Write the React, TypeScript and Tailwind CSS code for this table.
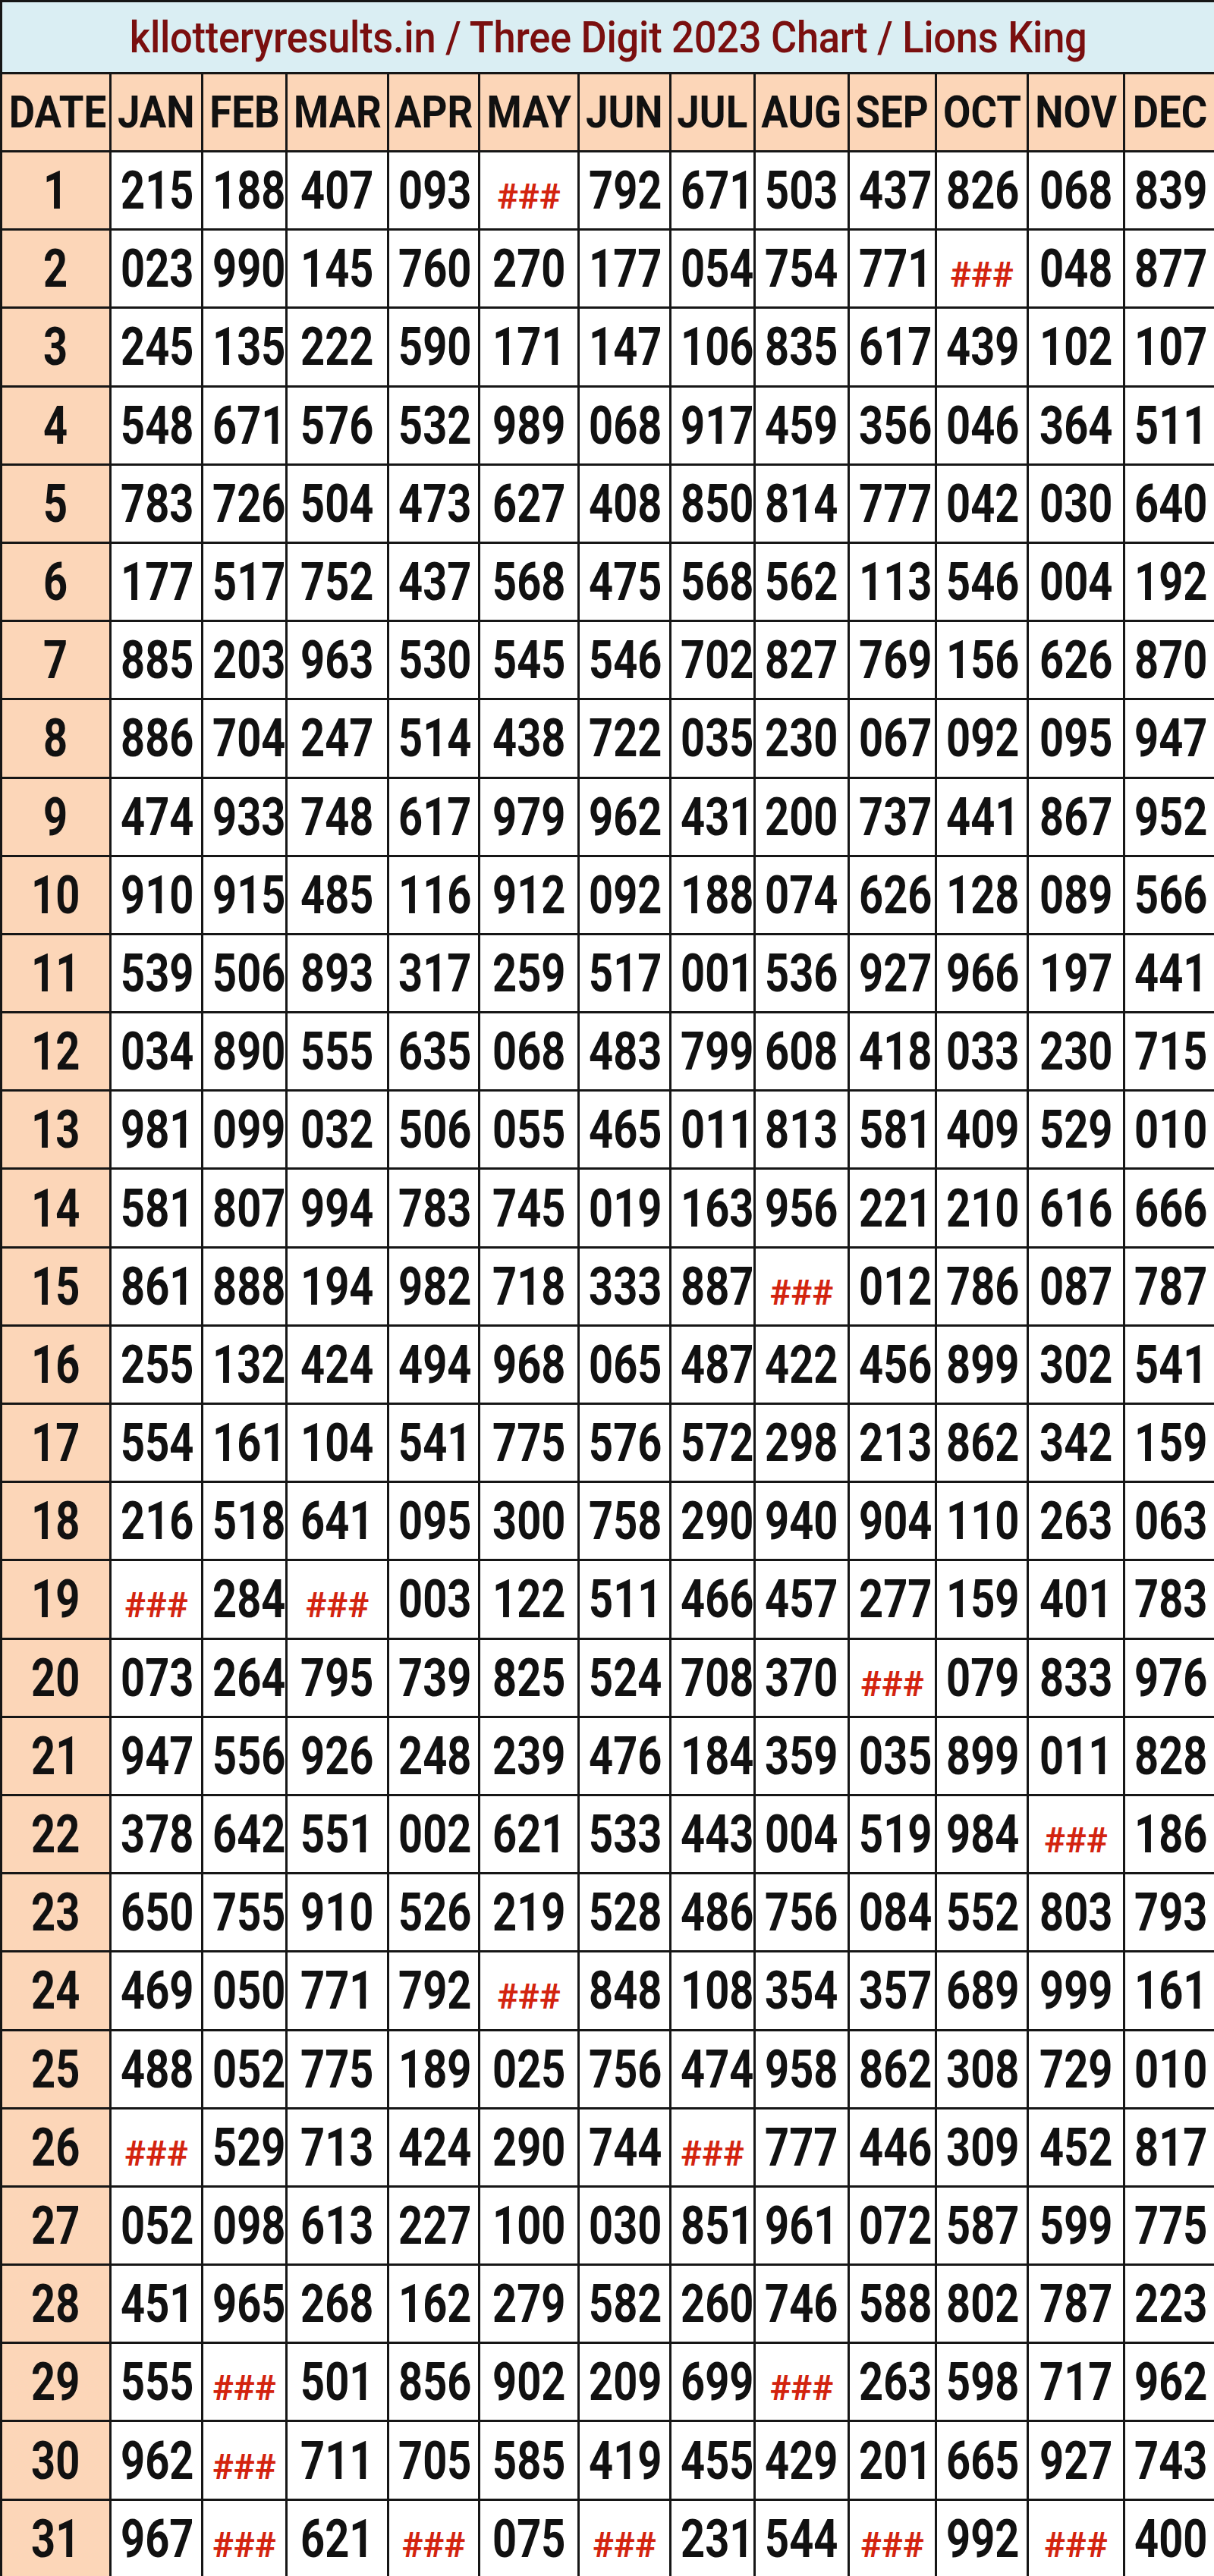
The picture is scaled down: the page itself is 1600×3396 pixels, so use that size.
const MONTHS = ['JAN', 'FEB', 'MAR', 'APR', 'MAY', 'JUN', 'JUL', 'AUG', 'SEP', 'OCT', 'NOV', 'DEC']

// column widths measured off the chart, DATE first
const COLS = [
  'w-[144px]', 'w-[121px]', 'w-[111px]', 'w-[134px]', 'w-[120px]', 'w-[131px]', 'w-[121px]',
  'w-[111px]', 'w-[124px]', 'w-[115px]', 'w-[121px]', 'w-[127px]', 'w-[120px]',
]

const ROWS = `215 188 407 093 ### 792 671 503 437 826 068 839
023 990 145 760 270 177 054 754 771 ### 048 877
245 135 222 590 171 147 106 835 617 439 102 107
548 671 576 532 989 068 917 459 356 046 364 511
783 726 504 473 627 408 850 814 777 042 030 640
177 517 752 437 568 475 568 562 113 546 004 192
885 203 963 530 545 546 702 827 769 156 626 870
886 704 247 514 438 722 035 230 067 092 095 947
474 933 748 617 979 962 431 200 737 441 867 952
910 915 485 116 912 092 188 074 626 128 089 566
539 506 893 317 259 517 001 536 927 966 197 441
034 890 555 635 068 483 799 608 418 033 230 715
981 099 032 506 055 465 011 813 581 409 529 010
581 807 994 783 745 019 163 956 221 210 616 666
861 888 194 982 718 333 887 ### 012 786 087 787
255 132 424 494 968 065 487 422 456 899 302 541
554 161 104 541 775 576 572 298 213 862 342 159
216 518 641 095 300 758 290 940 904 110 263 063
### 284 ### 003 122 511 466 457 277 159 401 783
073 264 795 739 825 524 708 370 ### 079 833 976
947 556 926 248 239 476 184 359 035 899 011 828
378 642 551 002 621 533 443 004 519 984 ### 186
650 755 910 526 219 528 486 756 084 552 803 793
469 050 771 792 ### 848 108 354 357 689 999 161
488 052 775 189 025 756 474 958 862 308 729 010
### 529 713 424 290 744 ### 777 446 309 452 817
052 098 613 227 100 030 851 961 072 587 599 775
451 965 268 162 279 582 260 746 588 802 787 223
555 ### 501 856 902 209 699 ### 263 598 717 962
962 ### 711 705 585 419 455 429 201 665 927 743
967 ### 621 ### 075 ### 231 544 ### 992 ### 400`
  .split('\n')
  .map(r => r.split(' '))

const cell = 'border-[3px] border-[#161616] p-0 text-center align-middle'

function Value({ v }: { v: string }) {
  if (v === '###') {
    return <span className="inline-block text-[47px] font-bold text-[#d3240f]">###</span>
  }
  return <span className="inline-block scale-x-[0.8] text-[70px] font-bold text-[#111]">{v}</span>
}

export default function App() {
  return (
    <div className="w-[1600px] bg-white font-['Roboto','Liberation_Sans',sans-serif]">
      <table className="w-[1600px] table-fixed border-collapse">
        <colgroup>
          {COLS.map((c, i) => <col key={i} className={c} />)}
        </colgroup>
        <thead>
          <tr className="h-[95px]">
            <th colSpan={13} className={cell + ' bg-[#daeef3] leading-none'}>
              <span className="inline-block scale-x-[0.92] text-[57px] font-medium tracking-[-0.3px] text-[#7a0f0f]">
                kllotteryresults.in / Three Digit 2023 Chart / Lions King
              </span>
            </th>
          </tr>
          <tr className="h-[103px]">
            <th className={cell + ' bg-[#fcd6b8] leading-none'}>
              <span className="inline-block scale-x-[0.88] text-[60px] font-bold text-[#111]">DATE</span>
            </th>
            {MONTHS.map(m => (
              <th key={m} className={cell + ' bg-[#fcd6b8] leading-none'}>
                <span className="inline-block scale-x-[0.88] text-[60px] font-bold text-[#111]">{m}</span>
              </th>
            ))}
          </tr>
        </thead>
        <tbody>
          {ROWS.map((row, i) => (
            <tr key={i} className="h-[103.2px]">
              <td className={cell + ' bg-[#fcd6b8] text-[70px] leading-none'}>
                <span className="inline-block scale-x-[0.8] font-bold text-[#111]">{i + 1}</span>
              </td>
              {row.map((v, j) => (
                <td key={j} className={cell + ' text-[70px] leading-none'}>
                  <Value v={v} />
                </td>
              ))}
            </tr>
          ))}
        </tbody>
      </table>
    </div>
  )
}
